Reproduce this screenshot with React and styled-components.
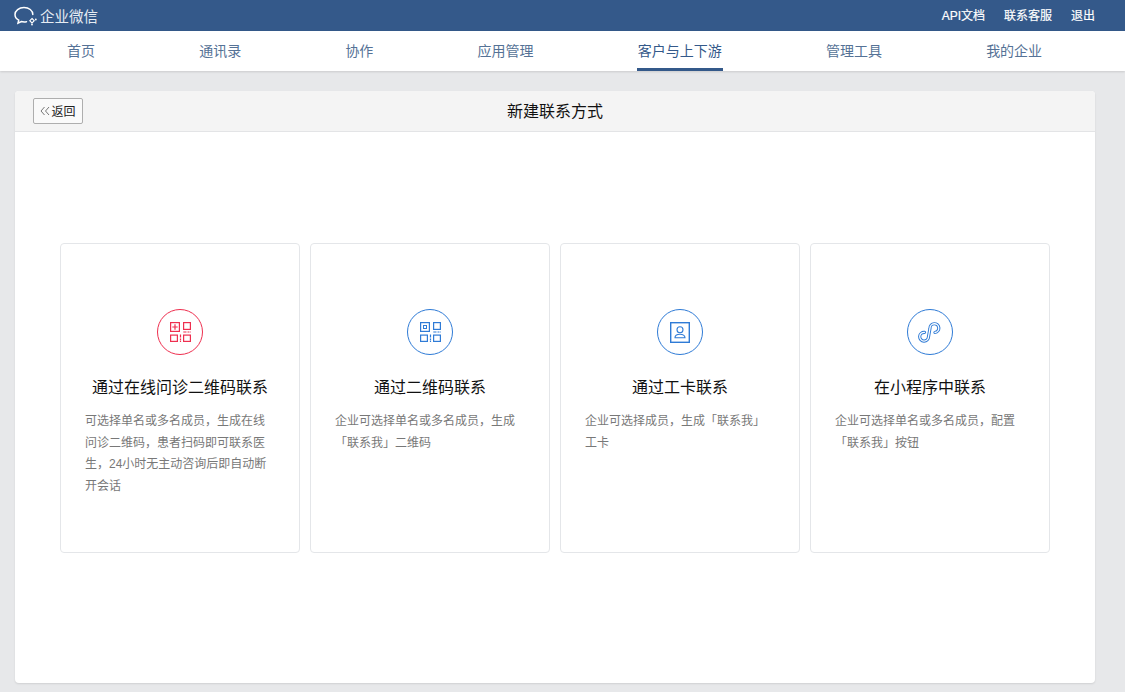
import React from 'react';
import styled, { createGlobalStyle } from 'styled-components';

const GlobalStyle = createGlobalStyle`
  html, body {
    margin: 0;
    padding: 0;
    background: #e7e8ea;
    font-family: "Liberation Sans", "Noto Sans CJK SC", sans-serif;
  }
  * {
    box-sizing: border-box;
  }
`;

const Page = styled.div`
  width: 1125px;
  height: 692px;
  overflow: hidden;
`;

const TopBar = styled.header`
  height: 31px;
  background: #34598a;
  display: flex;
  justify-content: space-between;
  align-items: center;
  padding: 0 30px 0 14px;
`;

const Logo = styled.div`
  display: flex;
  align-items: center;
  gap: 2px;
  color: #e6ecf3;
  font-size: 14.5px;
`;

const TopLinks = styled.div`
  display: flex;
  align-items: center;
  color: #fff;
  font-size: 12px;
  -webkit-text-stroke: 0.2px #fff;
`;

const TopLink = styled.a`
  color: #fff;
  line-height: 16px;
  & + & {
    margin-left: 19px;
    position: relative;
  }
  & + &::before {
    content: '';
    position: absolute;
    left: ${(p) => p.$bar}px;
    top: 2px;
    height: 12px;
    width: 1px;
    background: #6e8cb2;
  }
`;

const Nav = styled.nav`
  height: 40px;
  background: #fff;
  display: flex;
  gap: 104.2px;
  padding-left: 67px;
  box-shadow: 0 1px 2px rgba(0, 0, 0, 0.12);
  position: relative;
`;

const NavItem = styled.a`
  height: 40px;
  line-height: 40px;
  font-size: 14px;
  color: ${(p) => (p.$active ? '#34598a' : '#557296')};
  position: relative;

  ${(p) => p.$active && `
    &::after {
      content: '';
      position: absolute;
      left: -1px;
      right: -1px;
      bottom: 0;
      height: 3px;
      background: #34598a;
    }
  `}
`;

const Panel = styled.main`
  margin: 20px 30px 0 15px;
  height: 592px;
  background: #fff;
  border-radius: 4px;
  box-shadow: 0 1px 2px rgba(0, 0, 0, 0.1);
  overflow: hidden;
`;

const PanelHead = styled.div`
  height: 41px;
  background: #f4f4f4;
  border-bottom: 1px solid #e3e4e6;
  padding-bottom: 2px;
  position: relative;
  display: flex;
  align-items: center;
  justify-content: center;
  font-size: 16px;
  color: #111;
`;

const BackButton = styled.button`
  position: absolute;
  left: 18px;
  top: 7px;
  width: 50px;
  height: 26px;
  padding: 0 0 1px;
  background: #fafafa;
  border: 1px solid #aeaeae;
  border-radius: 2px;
  display: flex;
  align-items: center;
  justify-content: center;
  gap: 1px;
  font-family: inherit;
  font-size: 12px;
  color: #222;
`;

const CardRow = styled.div`
  display: flex;
  gap: 10px;
  padding: 111px 0 0 45px;
`;

const Card = styled.section`
  width: 240px;
  height: 310px;
  border: 1px solid #e4e6e9;
  border-radius: 4px;
  padding: 65px 24px 0;
  display: flex;
  flex-direction: column;
  align-items: center;
`;

const Circle = styled.div`
  width: 46px;
  height: 46px;
  border-radius: 50%;
  border: 1px solid ${(p) => p.$color};
  display: flex;
  align-items: center;
  justify-content: center;
  color: ${(p) => p.$color};
`;

const CardTitle = styled.h3`
  margin: 21px 0 0;
  font-size: 16px;
  font-weight: 400;
  line-height: 24px;
  color: #111;
  white-space: nowrap;
`;

const CardText = styled.p`
  margin: 11px 0 0;
  width: 190px;
  font-size: 12px;
  line-height: 21.7px;
  color: #787878;
`;

const QrFrame = ({ children }) => (
  <svg width="21" height="20" viewBox="0 0 21 20" fill="none" stroke="currentColor" strokeWidth="1.2">
    <rect x="0.6" y="0.6" width="8.8" height="8.8" />
    <rect x="13.6" y="0.6" width="6.8" height="6.8" />
    <rect x="0.6" y="13.1" width="6.8" height="6.3" />
    <rect x="13.6" y="13.1" width="6.8" height="6.3" />
    <path d="M13.3 10h3.200M17.500 10h1.500M19.500 10h1.200M10.500 12.500v3M10.500 16.500v1.500M10.500 18.500v1.500" />
    {children}
  </svg>
);

const CaseIcon = () => (
  <QrFrame>
    <path d="M5 2.300v5.400M2.300 5h5.400" />
  </QrFrame>
);

const CodeIcon = () => (
  <QrFrame>
    <rect x="3.500" y="3.500" width="3" height="3" strokeWidth="1" />
  </QrFrame>
);

const BadgeIcon = () => (
  <svg width="20" height="21" viewBox="0 0 20 21" fill="none" stroke="currentColor">
    <rect x="0.700" y="0.700" width="18.600" height="19.600" strokeWidth="1.400" />
    <circle cx="10" cy="7.800" r="3" strokeWidth="1.100" />
    <path d="M5 15.800c0-2.400 2.200-3.600 5-3.600s5 1.200 5 3.600z" strokeWidth="1.100" />
  </svg>
);

const miniPath = 'M6.500 10.300A4.400 4.400 0 1 0 10.500 14.700L12 6.200A4.400 4.400 0 1 1 17 10.500';

const MiniIcon = () => (
  <svg width="24" height="21" viewBox="0 0 24 21" fill="none" strokeLinecap="round">
    <path d={miniPath} stroke="currentColor" strokeWidth="3.200" />
    <path d={miniPath} stroke="#fff" strokeWidth="1.300" />
  </svg>
);

const navItems = ['首页', '通讯录', '协作', '应用管理', '客户与上下游', '管理工具', '我的企业'];

const cards = [
  {
    title: '通过在线问诊二维码联系',
    text: '可选择单名或多名成员，生成在线问诊二维码，患者扫码即可联系医生，24小时无主动咨询后即自动断开会话',
    color: '#ee2f4f',
    Icon: CaseIcon,
  },
  {
    title: '通过二维码联系',
    text: '企业可选择单名或多名成员，生成「联系我」二维码',
    color: '#2f7bd6',
    Icon: CodeIcon,
  },
  {
    title: '通过工卡联系',
    text: '企业可选择成员，生成「联系我」工卡',
    color: '#2f7bd6',
    Icon: BadgeIcon,
  },
  {
    title: '在小程序中联系',
    text: '企业可选择单名或多名成员，配置「联系我」按钮',
    color: '#2f7bd6',
    Icon: MiniIcon,
  },
];

export default function App() {
  return (
    <Page>
      <GlobalStyle />
      <TopBar>
        <Logo>
          <svg width="24" height="20" viewBox="0 0 24 20" fill="none" stroke="#fff" strokeWidth="1.500">
            <path d="M18.800 8.500C18.800 4.500 15 1.500 10 1.500S1 4.600 1 8.500c0 2.500 1.500 4.500 3.700 5.700l-.7 3 3.300-1.700c1 .3 2 .4 3 .4.700 0 1.500-.1 2.200-.2" strokeLinecap="round" />
            <path d="M18 12.500l2.200 2.200-2.200 2.200-2.200-2.200z" strokeWidth="1.100" />
            <circle cx="21.800" cy="13.500" r="0.900" fill="#fff" stroke="none" />
            <circle cx="18" cy="18.500" r="0.900" fill="#fff" stroke="none" />
          </svg>
          <span>企业微信</span>
        </Logo>
        <TopLinks>
          <TopLink>API文档</TopLink>
          <TopLink $bar={-12}>联系客服</TopLink>
          <TopLink $bar={-8}>退出</TopLink>
        </TopLinks>
      </TopBar>
      <Nav>
        {navItems.map((item) => (
          <NavItem key={item} $active={item === '客户与上下游'}>{item}</NavItem>
        ))}
      </Nav>
      <Panel>
        <PanelHead>
          <BackButton>
            <svg width="10" height="10" viewBox="0 0 10 10" fill="none" stroke="#777" strokeWidth="1">
              <path d="M4.500 1L1 5l3.500 4M9 1L5.500 5 9 9" />
            </svg>
            返回
          </BackButton>
          新建联系方式
        </PanelHead>
        <CardRow>
          {cards.map(({ title, text, color, Icon }) => (
            <Card key={title}>
              <Circle $color={color}>
                <Icon />
              </Circle>
              <CardTitle>{title}</CardTitle>
              <CardText>{text}</CardText>
            </Card>
          ))}
        </CardRow>
      </Panel>
    </Page>
  );
}
